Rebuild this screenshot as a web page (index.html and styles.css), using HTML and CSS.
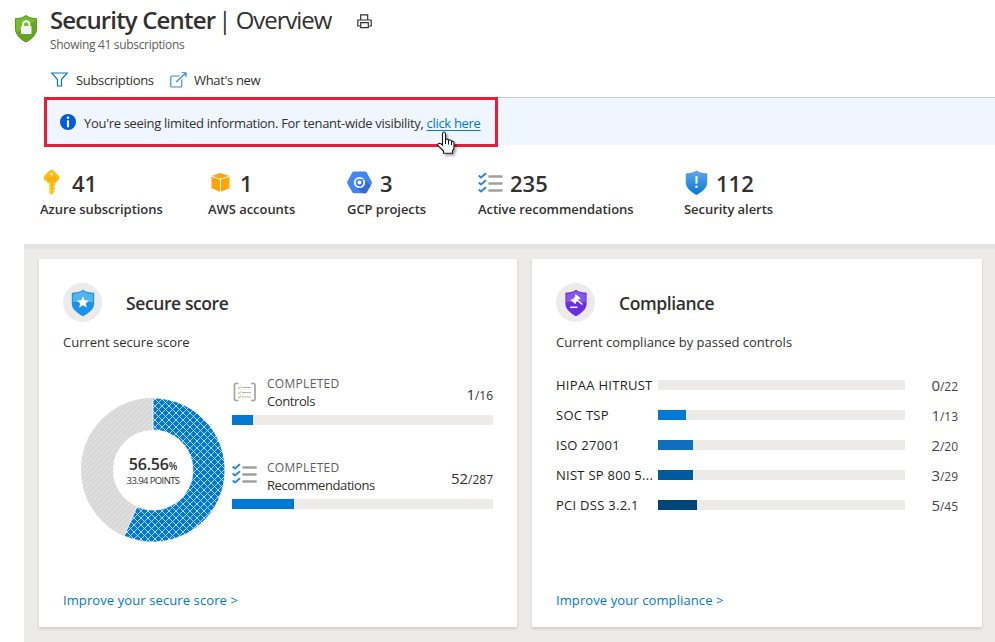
FILE: index.html
```html
<!DOCTYPE html>
<html lang="en">
<head>
<meta charset="utf-8">
<title>Security Center | Overview</title>
<link rel="stylesheet" href="styles.css">
</head>
<body>
<svg class="defs" width="0" height="0" aria-hidden="true">
  <defs>
    <linearGradient id="blueShield" x1="0" y1="0" x2="0" y2="1"><stop offset="0" stop-color="#63a6ec"/><stop offset="1" stop-color="#0078d4"/></linearGradient>
    <pattern id="cross" width="7" height="7" patternUnits="userSpaceOnUse" patternTransform="translate(4 1)"><rect width="7" height="7" fill="#0078d4"/><path d="M-1-1l9 9M8-1l-9 9" stroke="#c5e2f8" stroke-width=".9" fill="none"/></pattern>
    <pattern id="stripe" width="5" height="5" patternUnits="userSpaceOnUse"><rect width="5" height="5" fill="#d8d8d8"/><path d="M-1 6L6-1" stroke="#e6e6e6" stroke-width=".9"/></pattern>
    <symbol id="checks" viewBox="0 0 26 24"><path d="M.7 4.500L3 6.500l5-4.300M.7 11.500L3 13.500l5-4.300M.7 18.500L3 20.500l5-4.300" fill="none" stroke="#2b88d8" stroke-width="2"/><path d="M11.500 5.500h12M11.500 12.500h12M11.500 19.500h12" stroke="#a0a0a0" stroke-width="2.700" stroke-linecap="round"/></symbol>
  </defs>
</svg>
<header class="header">
  <svg class="logo" width="22" height="28" viewBox="0 0 22 28"><path d="M11 0c3 2.300 7 3.200 11 3.200V14c0 6-6 11-11 13.500C6 25 0 20 0 14V3.200C4 3.200 8 2.300 11 0z" fill="#5e9624"/><path d="M11 1.300c3 2 6.500 2.800 10 3V14c0 5.500-5.500 9.800-10 12C6.500 23.800 1 19.500 1 14V4.300c3.500-.2 7-1 10-3z" fill="#76bc2d"/><path d="M21 14c0 5.500-5.500 9.800-10 12-4-2-7.500-4.800-9.200-8.500L20 6z" fill="#66a323"/><rect x="6" y="11" width="10.500" height="8" rx=".8" fill="#f2f2f2"/><path d="M8 11V9.500a3.200 3.200 0 016.400 0V11" fill="none" stroke="#fff" stroke-width="1.900"/></svg>
  <div>
    <div class="title-row">
      <h1 class="title"><b>Security Center</b> <span>| Overview</span></h1>
      <svg class="print" width="15" height="15" viewBox="0 0 15 15" fill="none" stroke="#323130" stroke-width="1.200"><path d="M3.700 6V.8h7V6M3 12H.8V6h13.400v6H12M3.700 8.700h7.600v5H3.700z"/></svg>
    </div>
    <p class="subtitle">Showing 41 subscriptions</p>
  </div>
</header>
<nav class="toolbar">
  <a class="tool filter"><svg width="17" height="16" viewBox="0 0 17 16" fill="none" stroke="#0078d4" stroke-width="1.200"><path d="M.8 1h15.400L10.500 7.500V14H6.500V7.500z"/></svg><span>Subscriptions</span></a>
  <a class="tool news"><svg width="17" height="17" viewBox="0 0 17 17" fill="none" stroke="#2b88d8" stroke-width="1.100"><path d="M9.500 4H1.800Q.8 4 .8 5v9q0 1 1 1h9q1 0 1-1V7.500M6 10L16 1M11.500.8H16V5"/></svg><span>What's new</span></a>
</nav>
<section class="banner">
  <div class="notice">
    <svg width="16" height="16" viewBox="0 0 16 16"><circle cx="8" cy="8" r="8" fill="#015cda"/><circle cx="8" cy="3.700" r="1.300" fill="#fff"/><path d="M8 6.300v7" stroke="#fff" stroke-width="2.100"/></svg>
    <p>You're seeing limited information. For tenant-wide visibility, <a>click here</a></p>
    <svg class="pointer" width="22" height="28" viewBox="0 0 22 28"><path d="M5.500 14V3Q5.500 1 7 1t1.500 2v6q.5-1.200 1.800-.9 1.200.2 1.200 1.400.7-.9 1.800-.5 1.200.3 1.200 1.500.7-.7 1.800-.1 1 .5.700 2.200v3.800q-.3 2-1.500 3.600v2.200H6.500v-2.200Q3.500 17 1 14.700q-.8-1.700.7-2.200Q3.500 12 5.500 14z" fill="#fff" stroke="#16161e" stroke-width="1.100"/><path d="M8.500 9v4M11.500 10v3.500M14.500 11v3" stroke="#16161e"/></svg>
  </div>
</section>
<section class="stats">
  <div class="stat"><div class="figure"><svg width="24" height="26" viewBox="0 0 24 26"><path d="M10.200 0h2.600q.8.300 1.300 1l4.600 4.700q1.500 2 0 4L15 13.500v2l-1.500 1 1.800 2-2 2 1 1.300-2.700 3.200-2.600-3V13.500L4.300 9.700q-1.500-2 0-4L9 1z" fill="#ffbd11"/><path d="M9 13v9l2 2.400V13z" fill="#ffd33a"/><circle cx="11.600" cy="4" r="1.500" fill="#fff0ba"/><path d="M7 8h9M7 10h9" stroke="#f0a010" stroke-width=".8"/></svg><b>41</b></div><p>Azure subscriptions</p></div>
  <div class="stat"><div class="figure"><svg width="24" height="26" viewBox="0 0 24 26"><path d="M3.500 6L12.500 3 21.500 6v12.200l-9 3.800-9-3.800z" fill="#ffa50a"/><path d="M3.500 6.300l9 3 9-3M12.500 9.300V22" fill="none" stroke="#fff" stroke-width="1"/></svg><b>1</b></div><p>AWS accounts</p></div>
  <div class="stat"><div class="figure"><svg width="25" height="26" viewBox="0 0 25 26"><path d="M6.800 1.600h11.400q1 0 1.500.9l5 9.200q.5 1 0 2l-4.700 8.600q-.6 1-1.600 1H6.800q-1 0-1.500-1L.3 13.500q-.5-.9 0-1.800l4.900-9.200q.5-.9 1.600-.9z" fill="#4285f4"/><path d="M16.500 9l7 6.500-4 7q-.5.800-1.500.8h-2.500L9 17z" fill="#356cd4"/><circle cx="12.500" cy="12.500" r="4.700" fill="none" stroke="#fff" stroke-width="1.800"/><circle cx="12.500" cy="12.500" r="2" fill="#fff"/><path d="M12.500 9.500h5M9 11.500l2 4M15.500 13.500l-2.800 4" stroke="#4285f4" stroke-width=".7"/></svg><b>3</b></div><p>GCP projects</p></div>
  <div class="stat"><div class="figure"><svg class="list" width="26" height="24"><use href="#checks"/></svg><b>235</b></div><p>Active recommendations</p></div>
  <div class="stat"><div class="figure"><svg class="alert" width="25" height="26" viewBox="0 0 25 26"><path d="M12.500.8c3 2.200 6.500 2.900 10.400 3v9c0 5.500-6 9.500-10.400 12C8 22.300 2.100 18.300 2.100 12.800v-9C6 3.700 9.500 3 12.500.8z" fill="url(#blueShield)" stroke="#1a7ad4" stroke-width=".5"/><path d="M12.500 6v7.500" stroke="#fff" stroke-width="2"/><circle cx="12.500" cy="16.700" r="1.300" fill="#fff"/></svg><b>112</b></div><p>Security alerts</p></div>
</section>
<main class="panel">
  <section class="card">
    <div class="card-head"><span class="disc"><svg width="24" height="28" viewBox="0 0 24 28"><path d="M12 .8c3 2.300 7 2.900 11.200 3v11c0 5.500-6 9.700-11.200 12.500C6.800 24.500.8 20.300.8 14.800v-11C5 3.700 9 3.100 12 .8z" fill="#1b93eb"/><path d="M12 2c3 2 6.500 2.700 10 2.900V13H2V4.900C5.500 4.700 9 4 12 2z" fill="#50b3ec"/><path d="M12 7.300l1.700 3.900 4.300.4-3.200 2.800 1 4.200-3.800-2.300-3.800 2.300 1-4.200L6 11.600l4.300-.4z" fill="#fff"/></svg></span><h2>Secure score</h2></div>
    <p class="current">Current secure score</p>
    <div class="score">
      <div class="donut">
        <svg width="144" height="144" viewBox="0 0 144 144"><circle cx="72" cy="72" r="56" fill="none" stroke="url(#stripe)" stroke-width="32"/><path d="M72 0A72 72 0 1 1 43.200 138L56 108.700A40 40 0 1 0 72 32z" fill="url(#cross)" stroke="#fff" stroke-width=".8"/></svg>
        <div class="donut-text"><div class="pct">56.56<small>%</small></div><div class="pts">33.94 POINTS</div></div>
      </div>
      <div class="meters">
        <div class="meter">
          <div class="meter-row"><svg width="26" height="20" viewBox="0 0 26 20" fill="none"><path d="M6.500 1.500H4Q2.500 1.500 2.500 3v14q0 1.500 1.500 1.500h2.500M19 1.500h2.500Q23 1.500 23 3v14q0 1.500-1.500 1.500H19" stroke="#a3a3a3" stroke-width="1.700"/><path d="M6 5.500l1.200 1L9 4.500M6 10.500l1.200 1L9 9.500M6 15l1.200 1L9 14" stroke="#86c440"/><path d="M10 5.500h9M10 10.500h9M10 15h9" stroke="#b5b5b5" stroke-width="1.200"/></svg><p><span>COMPLETED</span>Controls</p><div class="ratio">1<small>/16</small></div></div>
          <div class="track"><i style="width:8.1%"></i></div>
        </div>
        <div class="meter">
          <div class="meter-row"><svg class="list" width="26" height="24"><use href="#checks"/></svg><p><span>COMPLETED</span>Recommendations</p><div class="ratio">52<small>/287</small></div></div>
          <div class="track"><i style="width:23.8%"></i></div>
        </div>
      </div>
    </div>
    <a class="improve">Improve your secure score &gt;</a>
  </section>
  <section class="card">
    <div class="card-head"><span class="disc"><svg width="24" height="28" viewBox="0 0 24 28"><path d="M12 .8c3 2.300 6.500 2.900 10.600 3v11c0 5.500-5.600 9.700-10.600 12.500C7 24.500 1.400 20.300 1.400 14.800v-11C5.500 3.700 9 3.100 12 .8z" fill="#6a2ee2"/><path d="M12 2c3 2 6 2.700 9.500 2.900V13h-19V4.900C6 4.700 9 4 12 2z" fill="#8757e8"/><path d="M8.500 11.200l3.700-4.200 2.800 2.300-3.700 4.200z" fill="#fff" stroke="#fff"/><path d="M7 10.500l4.800 4M11.300 5.800l4.800 4M13 11l5.500 4.500" stroke="#fff" stroke-width="1.600"/><path d="M6 18.300h7.500" stroke="#fff" stroke-width="1.500"/></svg></span><h2>Compliance</h2></div>
    <p class="current">Current compliance by passed controls</p>
    <div class="controls">
      <div class="control c0"><span>HIPAA HITRUST</span><div class="track"><i style="width:0"></i></div><div class="ratio">0<small>/22</small></div></div>
      <div class="control c1"><span>SOC TSP</span><div class="track"><i style="width:11.3%"></i></div><div class="ratio">1<small>/13</small></div></div>
      <div class="control c2"><span>ISO 27001</span><div class="track"><i style="width:14.2%"></i></div><div class="ratio">2<small>/20</small></div></div>
      <div class="control c3"><span>NIST SP 800 5...</span><div class="track"><i style="width:14.2%"></i></div><div class="ratio">3<small>/29</small></div></div>
      <div class="control c4"><span>PCI DSS 3.2.1</span><div class="track"><i style="width:15.8%"></i></div><div class="ratio">5<small>/45</small></div></div>
    </div>
    <a class="improve">Improve your compliance &gt;</a>
  </section>
</main>
</body>
</html>
```
FILE: styles.css
```css
* { box-sizing: border-box; }
body { margin: 0; width: 995px; height: 642px; overflow: hidden; background: #fff; color: #323130; font: 13px/18px "Open Sans", "Noto Sans", sans-serif; display: flex; flex-direction: column; }
h1, h2, p { margin: 0; }
svg { flex: none; display: block; }
.defs { position: absolute; }
.header { height: 64px; display: flex; padding: 4px 0 0 15px; gap: 13px; }
.logo { margin-top: 11px; }
.title-row { display: flex; align-items: center; height: 32px; }
.title { width: 307px; white-space: nowrap; font-size: 24px; line-height: 32px; font-weight: 400; letter-spacing: -1.1px; }
.title b { font-weight: 600; letter-spacing: -.84px; }
.title span { margin-left: -2px; letter-spacing: -1.05px; }
.print { margin-top: 2px; }
.subtitle { font-size: 12px; color: #605e5c; line-height: 18px; letter-spacing: -.32px; }
.toolbar { height: 33px; display: flex; padding-left: 51px; }
.tool { display: flex; align-items: center; height: 32px; white-space: nowrap; letter-spacing: -.33px; }
.filter { width: 119px; gap: 8px; }
.news { gap: 7px; }
.banner { height: 48px; margin-left: 44px; background: #eff6ff; border-top: 1px solid #c8ccd2; }
.notice { position: relative; width: 454px; height: 50px; margin-top: -1px; border: 3px solid #ee1b36; display: flex; align-items: center; gap: 8px; padding-left: 13px; white-space: nowrap; letter-spacing: -.31px; }
.notice p { padding-top: 2px; }
.notice a { color: #0078d4; text-decoration: underline; text-underline-offset: 2px; }
.pointer { position: absolute; left: 390px; top: 31px; filter: drop-shadow(2px 2px 1px #0005); }
.stats { height: 99px; padding: 24px 0 0 40px; display: grid; grid-template-columns: 168px 139px 131px 206px 1fr; }
.figure { display: flex; align-items: center; height: 28px; }
.figure svg { margin-right: 8px; }
.figure .list { margin-right: 6px; }
.figure .alert { margin-right: 7px; }
.figure b { font-size: 22px; line-height: 28px; font-weight: 600; }
.stat p { font-weight: 600; letter-spacing: -.05px; margin-top: 3px; white-space: nowrap; }
.panel { height: 398px; margin-left: 24px; padding: 10px 13px 15px 15px; border-top: 5px solid #e3e3e3; background: #edebe9; display: grid; grid-template-columns: 478px 450px; gap: 15px; }
.card { height: 368px; background: #fff; padding: 24px; box-shadow: 0 2px 3px #0002; display: flex; flex-direction: column; }
.card-head { display: flex; align-items: center; gap: 24px; height: 39px; }
.disc { width: 39px; height: 39px; border-radius: 50%; background: #edebe9; display: grid; place-items: center; }
.card h2 { font-size: 17.5px; line-height: 24px; font-weight: 600; padding-top: 1px; letter-spacing: -.4px; }
.current { margin-top: 11px; font-weight: 500; }
.score { display: flex; height: 194px; margin-top: 23px; }
.donut { position: relative; width: 169px; padding: 24px 0 0 18px; }
.donut-text { position: absolute; left: 18px; top: 81px; width: 144px; text-align: center; white-space: nowrap; }
.pct { font-size: 16px; line-height: 18px; font-weight: 600; letter-spacing: -.2px; }
.pct small { font-size: 10px; }
.pts { font-size: 9.5px; line-height: 12px; letter-spacing: -.6px; }
.meters { width: 261px; }
.meter { height: 84px; }
.meter-row { display: flex; align-items: center; height: 35px; margin-bottom: 6px; }
.meter-row .list { margin-top: -3px; }
.meter-row p { width: 140px; margin-left: 9px; letter-spacing: -.4px; }
.meter-row p span { display: block; color: #605e5c; font-size: 12px; line-height: 17px; padding-top: 1px; letter-spacing: .3px; }
.ratio { margin-left: auto; font-size: 15px; white-space: nowrap; letter-spacing: -.1px; }
.ratio small { font-size: 12px; letter-spacing: 0; }
.meter-row .ratio { padding-top: 7px; }
.track { height: 10px; background: #edebe9; }
.track i { display: block; height: 100%; background: #0078d4; }
.controls { margin-top: 19px; height: 198px; color: #201f1e; }
.control { display: grid; grid-template-columns: 102px 247px 53px; align-items: center; height: 30px; }
.control > span { white-space: nowrap; letter-spacing: .27px; }
.control .ratio { color: #484644; padding-top: 2px; }
.c2 i { background: #106ebe; }
.c3 i { background: #005a9e; }
.c4 i { background: #004578; }
.improve { color: #0078d4; margin-top: auto; margin-bottom: -6px; letter-spacing: .1px; }
```
